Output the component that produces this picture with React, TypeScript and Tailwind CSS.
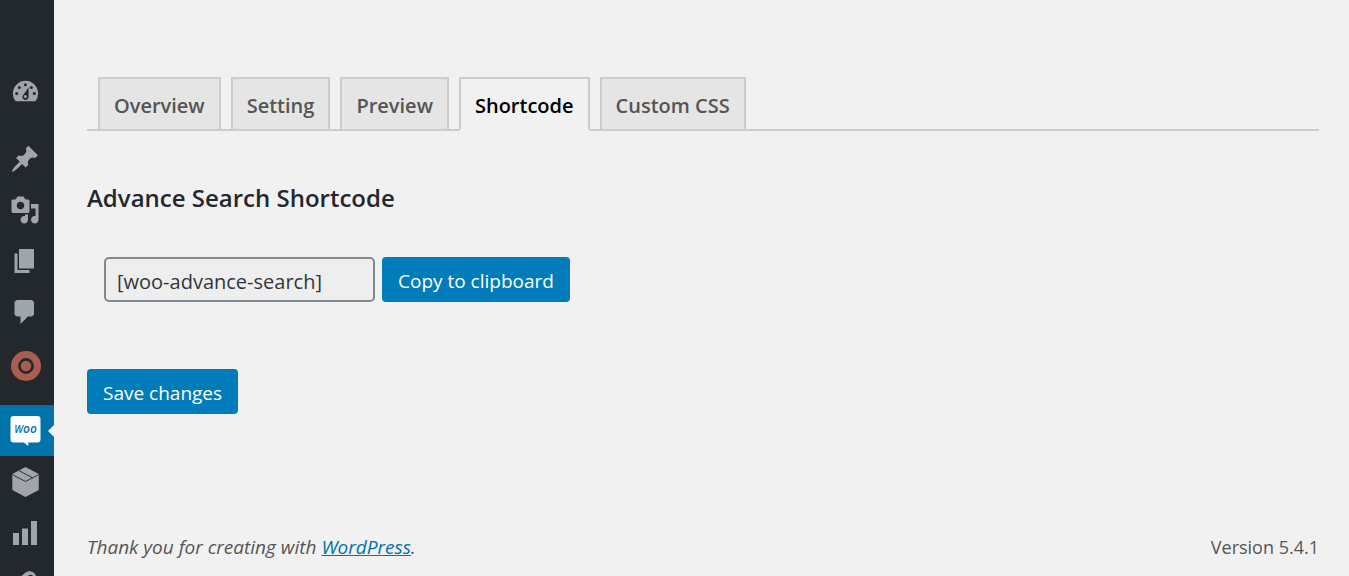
import { useState, type ReactNode } from 'react';

const TABS = ['Overview', 'Setting', 'Preview', 'Shortcode', 'Custom CSS'];

function Dashicon({ d }: { d: string }) {
  return (
    <svg viewBox="0 0 20 20" className="size-[30px] fill-current" aria-hidden="true">
      <path fillRule="evenodd" d={d} />
    </svg>
  );
}

function DashboardIcon() {
  return (
    <svg viewBox="10 11 30 30" className="size-[30px]" aria-hidden="true">
      <path fill="currentColor" d="M15.6 35.2h19.8a12.6 12.6 0 1 0-19.8 0z" />
      <g fill="#23282d">
        <circle cx="16.7" cy="27.4" r="1.5" />
        <circle cx="19.3" cy="21.6" r="1.5" />
        <circle cx="25.4" cy="18.7" r="1.5" />
        <circle cx="31.4" cy="21.6" r="1.5" />
        <circle cx="34.3" cy="27.4" r="1.5" />
        <path d="M28.6 21.2v9.2a3.1 3.1 0 1 1-5-2z" />
      </g>
      <circle cx="25.4" cy="30.5" r="1.5" fill="currentColor" />
    </svg>
  );
}

function RingIcon() {
  return (
    <svg viewBox="0 0 30 30" className="ml-px size-[30px]" aria-hidden="true">
      <circle cx="15" cy="15" r="15" fill="#a85d4f" />
      <circle cx="15" cy="15" r="6.6" fill="none" stroke="#23282d" strokeWidth="2.6" />
    </svg>
  );
}

function WooIcon() {
  return (
    <svg viewBox="-0.5 0 31 30" className="h-[30px] w-[31px]" aria-hidden="true">
      <path
        fill="#fff"
        d="M3 0h24a3 3 0 0 1 3 3v20.500a3 3 0 0 1-3 3h-9.200v3.500l-4.500-3.500H3a3 3 0 0 1-3-3V3a3 3 0 0 1 3-3z"
      />
      <text
        x="15"
        y="17"
        textAnchor="middle"
        fill="#0073aa"
        className="font-['Open_Sans',sans-serif] text-[10px] font-semibold italic"
      >
        W<tspan className="text-[12px]">oo</tspan>
      </text>
    </svg>
  );
}

function BoxIcon() {
  return (
    <svg viewBox="0 0 30 30" className="size-[30px]" aria-hidden="true">
      <path fill="currentColor" d="M15.500 0l13.300 7v16L15.500 30 2.300 23V7z" />
      <path
        fill="none"
        stroke="#23282d"
        strokeWidth="0.9"
        d="M2.300 7.600l13.200 6.900 13.300-6.900M9 3.700l13.400 7"
      />
    </svg>
  );
}

function MarketingIcon() {
  return (
    <svg viewBox="0 0 30 30" className="size-[30px]" aria-hidden="true">
      <path
        fill="currentColor"
        fillRule="evenodd"
        d="M9 9l6-5c4-3 8-1.500 10 1l3 5-2 14-12 4-8-12zM18 7c2-2 4.500-1.500 5.500 1l1 4-5-1z"
      />
    </svg>
  );
}

const PIN =
  'M10.440 3.020l1.820-1.820 6.360 6.350-1.830 1.820c-1.050-.68-2.480-.57-3.410.36l-.75.75c-.92.93-1.040 2.350-.35 3.410l-1.830 1.820-2.410-2.410-2.800 2.790c-.42.42-3.380 2.710-3.800 2.290s1.860-3.390 2.280-3.810l2.790-2.790L4.100 9.360l1.830-1.820c1.050.69 2.480.57 3.400-.36l.75-.75c.93-.92 1.050-2.350.36-3.410z';
const MEDIA =
  'M13 11V4c0-.55-.45-1-1-1h-1.670L9 1H5L3.670 3H2c-.55 0-1 .45-1 1v7c0 .55.45 1 1 1h10c.55 0 1-.45 1-1zM7 4.500c1.380 0 2.500 1.120 2.500 2.500S8.380 9.500 7 9.500 4.500 8.380 4.500 7 5.620 4.500 7 4.500zM14 6h5v10.500c0 1.380-1.120 2.500-2.500 2.500S14 17.880 14 16.500s1.120-2.500 2.500-2.500c.17 0 .34.02.5.05V9h-3V6zm-4 8.050V13h2v3.500c0 1.380-1.120 2.500-2.500 2.500S7 17.880 7 16.500 8.120 14 9.500 14c.17 0 .34.02.5.05z';
const PAGES = 'M6 15V2h10v13H6zm-1 1h8v2H3V5h2v11z';
const COMMENTS =
  'M5 2h9c1.100 0 2 .9 2 2v7c0 1.100-.9 2-2 2h-2l-5 5v-5H5c-1.100 0-2-.9-2-2V4c0-1.100.9-2 2-2z';
const BARS = 'M18 18V2h-4v16h4zm-6 0V7H8v11h4zm-6 0v-8H2v8h4z';

function MenuItem({ label, active, children }: { label: string; active?: boolean; children: ReactNode }) {
  return (
    <a
      href="#"
      aria-label={label}
      aria-current={active ? 'page' : undefined}
      className={`relative flex h-[51px] shrink-0 items-center pl-2.5 ${active ? 'bg-[#0073aa] text-white' : 'text-[#a0a5aa]'}`}
    >
      {children}
      {active && (
        <span className="absolute top-1/2 right-0 -translate-y-1/2 border-y-6 border-r-6 border-y-transparent border-r-[#f1f1f1]" />
      )}
    </a>
  );
}

export default function App() {
  const [tab, setTab] = useState('Shortcode');
  const code = '[woo-advance-search]';

  return (
    <div className="flex h-screen overflow-hidden bg-[#f1f1f1] font-['Open_Sans','Noto_Sans',sans-serif] text-[#444]">
      <nav aria-label="Admin menu" className="flex w-[54px] shrink-0 flex-col overflow-hidden bg-[#23282d] pt-[66px]">
        <MenuItem label="Dashboard"><DashboardIcon /></MenuItem>
        <div className="h-4 shrink-0" />
        <MenuItem label="Posts"><Dashicon d={PIN} /></MenuItem>
        <MenuItem label="Media"><Dashicon d={MEDIA} /></MenuItem>
        <MenuItem label="Pages"><Dashicon d={PAGES} /></MenuItem>
        <MenuItem label="Comments"><Dashicon d={COMMENTS} /></MenuItem>
        <div className="h-[3px] shrink-0" />
        <MenuItem label="Search"><RingIcon /></MenuItem>
        <div className="h-3.5 shrink-0" />
        <MenuItem label="WooCommerce" active><WooIcon /></MenuItem>
        <MenuItem label="Products"><BoxIcon /></MenuItem>
        <MenuItem label="Analytics"><Dashicon d={BARS} /></MenuItem>
        <MenuItem label="Marketing"><MarketingIcon /></MenuItem>
      </nav>

      <div className="flex min-w-0 flex-1 flex-col pr-[30px] pl-[33px]">
        <main className="flex-1 pt-[77px]">
          <div role="tablist" className="flex gap-2.5 border-b-2 border-[#ccc] pl-[11px]">
            {TABS.map((name) => (
              <button
                key={name}
                type="button"
                role="tab"
                aria-selected={tab === name}
                onClick={() => setTab(name)}
                className={`-mb-[2px] h-[54px] border-2 border-[#ccc] px-3.5 pt-[3px] text-[20px] font-semibold ${
                  tab === name ? 'border-b-[#f1f1f1] bg-[#f1f1f1] text-black' : 'bg-[#e5e5e5] text-[#555]'
                }`}
              >
                {name}
              </button>
            ))}
          </div>

          <h2 className="mt-[51px] text-[24px] leading-8 font-semibold text-[#23282d]">Advance Search Shortcode</h2>

          <div className="mt-[43px] flex gap-[7px] pl-[17px]">
            <input
              aria-label="Shortcode"
              readOnly
              value={code}
              className="h-[45px] w-[271px] rounded-[5px] border-2 border-[#7e8993] bg-[#eee] px-[11px] pt-[3px] text-[20px] text-[#32373c]"
            />
            <button
              type="button"
              onClick={() => navigator.clipboard?.writeText(code)}
              className="h-[45px] rounded bg-[#007cba] px-4 pt-[3px] text-[19px] text-white"
            >
              Copy to clipboard
            </button>
          </div>

          <button type="button" className="mt-[67px] h-[45px] rounded bg-[#007cba] px-4 pt-[3px] text-[19px] text-white">
            Save changes
          </button>
        </main>

        <footer className="flex justify-between pb-4 text-[19px] leading-[26px] text-[#555]">
          <p className="italic">
            Thank you for creating with{' '}
            <a href="#" className="text-[#0073aa] underline">WordPress</a>.
          </p>
          <p className="text-[18px]">Version 5.4.1</p>
        </footer>
      </div>
    </div>
  );
}
